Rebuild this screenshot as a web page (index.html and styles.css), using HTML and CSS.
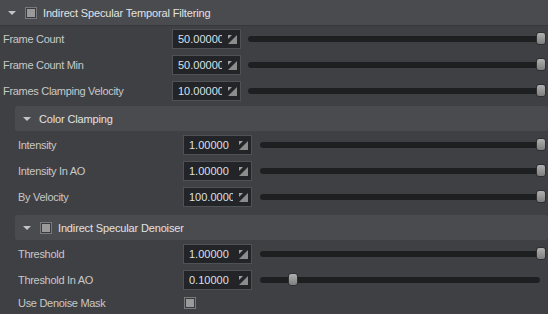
FILE: index.html
```html
<!DOCTYPE html>
<html>
<head>
    <title>Indirect Specular Temporal Filtering</title>
    <link rel="stylesheet" href="styles.css">
</head>
<body>
    <div class="panel">
        <div class="head top">
            <span class="arrow"></span>
            <span class="check"></span>
            <span class="title">Indirect Specular Temporal Filtering</span>
        </div>

        <div class="row">
            <span class="label">Frame Count</span>
            <div class="field"><span class="num">50.000000</span><svg class="drag" width="9" height="9" viewBox="0 0 9 9"><polygon points="0,0 4,0 0,4" fill="#a0a0a0"/><polygon points="9,0 9,9 0,9" fill="#8c8c8c"/></svg></div>
            <div class="slider"><div class="track"></div><div class="thumb" style="left: calc(100% - 10px)"></div></div>
        </div>
        <div class="row">
            <span class="label">Frame Count Min</span>
            <div class="field"><span class="num">50.000000</span><svg class="drag" width="9" height="9" viewBox="0 0 9 9"><polygon points="0,0 4,0 0,4" fill="#a0a0a0"/><polygon points="9,0 9,9 0,9" fill="#8c8c8c"/></svg></div>
            <div class="slider"><div class="track"></div><div class="thumb" style="left: calc(100% - 10px)"></div></div>
        </div>
        <div class="row">
            <span class="label">Frames Clamping Velocity</span>
            <div class="field"><span class="num">10.000000</span><svg class="drag" width="9" height="9" viewBox="0 0 9 9"><polygon points="0,0 4,0 0,4" fill="#a0a0a0"/><polygon points="9,0 9,9 0,9" fill="#8c8c8c"/></svg></div>
            <div class="slider"><div class="track"></div><div class="thumb" style="left: calc(100% - 10px)"></div></div>
        </div>

        <div class="group">
            <div class="head">
                <span class="arrow"></span>
                <span class="title">Color Clamping</span>
            </div>
            <div class="row">
                <span class="label">Intensity</span>
                <div class="field"><span class="num">1.00000</span><svg class="drag" width="9" height="9" viewBox="0 0 9 9"><polygon points="0,0 4,0 0,4" fill="#a0a0a0"/><polygon points="9,0 9,9 0,9" fill="#8c8c8c"/></svg></div>
                <div class="slider"><div class="track"></div><div class="thumb" style="left: calc(100% - 10px)"></div></div>
            </div>
            <div class="row">
                <span class="label">Intensity In AO</span>
                <div class="field"><span class="num">1.00000</span><svg class="drag" width="9" height="9" viewBox="0 0 9 9"><polygon points="0,0 4,0 0,4" fill="#a0a0a0"/><polygon points="9,0 9,9 0,9" fill="#8c8c8c"/></svg></div>
                <div class="slider"><div class="track"></div><div class="thumb" style="left: calc(100% - 10px)"></div></div>
            </div>
            <div class="row">
                <span class="label">By Velocity</span>
                <div class="field"><span class="num">100.00000</span><svg class="drag" width="9" height="9" viewBox="0 0 9 9"><polygon points="0,0 4,0 0,4" fill="#a0a0a0"/><polygon points="9,0 9,9 0,9" fill="#8c8c8c"/></svg></div>
                <div class="slider"><div class="track"></div><div class="thumb" style="left: calc(100% - 10px)"></div></div>
            </div>
        </div>

        <div class="group">
            <div class="head">
                <span class="arrow"></span>
                <span class="check"></span>
                <span class="title">Indirect Specular Denoiser</span>
            </div>
            <div class="row">
                <span class="label">Threshold</span>
                <div class="field"><span class="num">1.00000</span><svg class="drag" width="9" height="9" viewBox="0 0 9 9"><polygon points="0,0 4,0 0,4" fill="#a0a0a0"/><polygon points="9,0 9,9 0,9" fill="#8c8c8c"/></svg></div>
                <div class="slider"><div class="track"></div><div class="thumb" style="left: calc(100% - 10px)"></div></div>
            </div>
            <div class="row">
                <span class="label">Threshold In AO</span>
                <div class="field"><span class="num">0.10000</span><svg class="drag" width="9" height="9" viewBox="0 0 9 9"><polygon points="0,0 4,0 0,4" fill="#a0a0a0"/><polygon points="9,0 9,9 0,9" fill="#8c8c8c"/></svg></div>
                <div class="slider"><div class="track"></div><div class="thumb" style="left: calc((100% - 10px) * 0.1)"></div></div>
            </div>
            <div class="row short">
                <span class="label">Use Denoise Mask</span>
                <span class="check"></span>
            </div>
        </div>
    </div>
</body>
</html>
```

FILE: styles.css
```css
body {
    margin: 0;
    background: #3f4044;
    font-family: "Liberation Sans", Arial, sans-serif;
    font-size: 11px;
    color: #c8c8c8;
    overflow: hidden;
}
.panel {
    width: 548px;
}
.head {
    display: flex;
    align-items: center;
    height: 25px;
    margin-bottom: 1px;
    padding-left: 8px;
    background: #4a4b4f;
    border-radius: 3px;
}
.head.top {
    border-radius: 0;
    box-shadow: 0 1px 0 #37383b;
}
.title {
    color: #e2e2e2;
    letter-spacing: -0.15px;
}
.arrow {
    width: 0;
    height: 0;
    border-left: 4px solid transparent;
    border-right: 4px solid transparent;
    border-top: 4px solid #c4c4c4;
    margin-right: 8px;
}
.check {
    width: 10px;
    height: 10px;
    border: 1px solid #78797c;
    background: #9a9a9a;
    box-shadow: inset 0 0 0 1px #3a3b3e;
    margin-left: 1px;
    margin-right: 6px;
}
.group {
    margin-left: 15px;
    margin-top: 2px;
    padding-bottom: 3px;
}
.row {
    display: flex;
    align-items: center;
    height: 26px;
    padding-left: 3px;
}
.row.short {
    height: 20px;
}
.label {
    width: 169px;
    flex-shrink: 0;
    white-space: nowrap;
    letter-spacing: -0.3px;
}
.group .label {
    width: 165px;
}
.field {
    display: flex;
    align-items: center;
    width: 67px;
    height: 18px;
    border: 1px solid #505155;
    background: #232427;
    flex-shrink: 0;
}
.num {
    width: 44px;
    margin-left: 5px;
    overflow: hidden;
    white-space: nowrap;
    color: #dae0e8;
}
.drag {
    margin-left: 6px;
}
.slider {
    flex: 1;
    position: relative;
    height: 14px;
    margin-left: 7px;
    margin-right: 2px;
}
.group .slider {
    margin-left: 8px;
}
.track {
    position: absolute;
    left: 0;
    right: 6px;
    top: 4px;
    height: 6px;
    border-radius: 3px;
    background: #1e1f21;
}
.thumb {
    position: absolute;
    top: 0;
    width: 8px;
    height: 11px;
    border: 1px solid #2e2f31;
    border-radius: 3px;
    background: linear-gradient(#b0b0b0, #7e7e7e);
}
```
